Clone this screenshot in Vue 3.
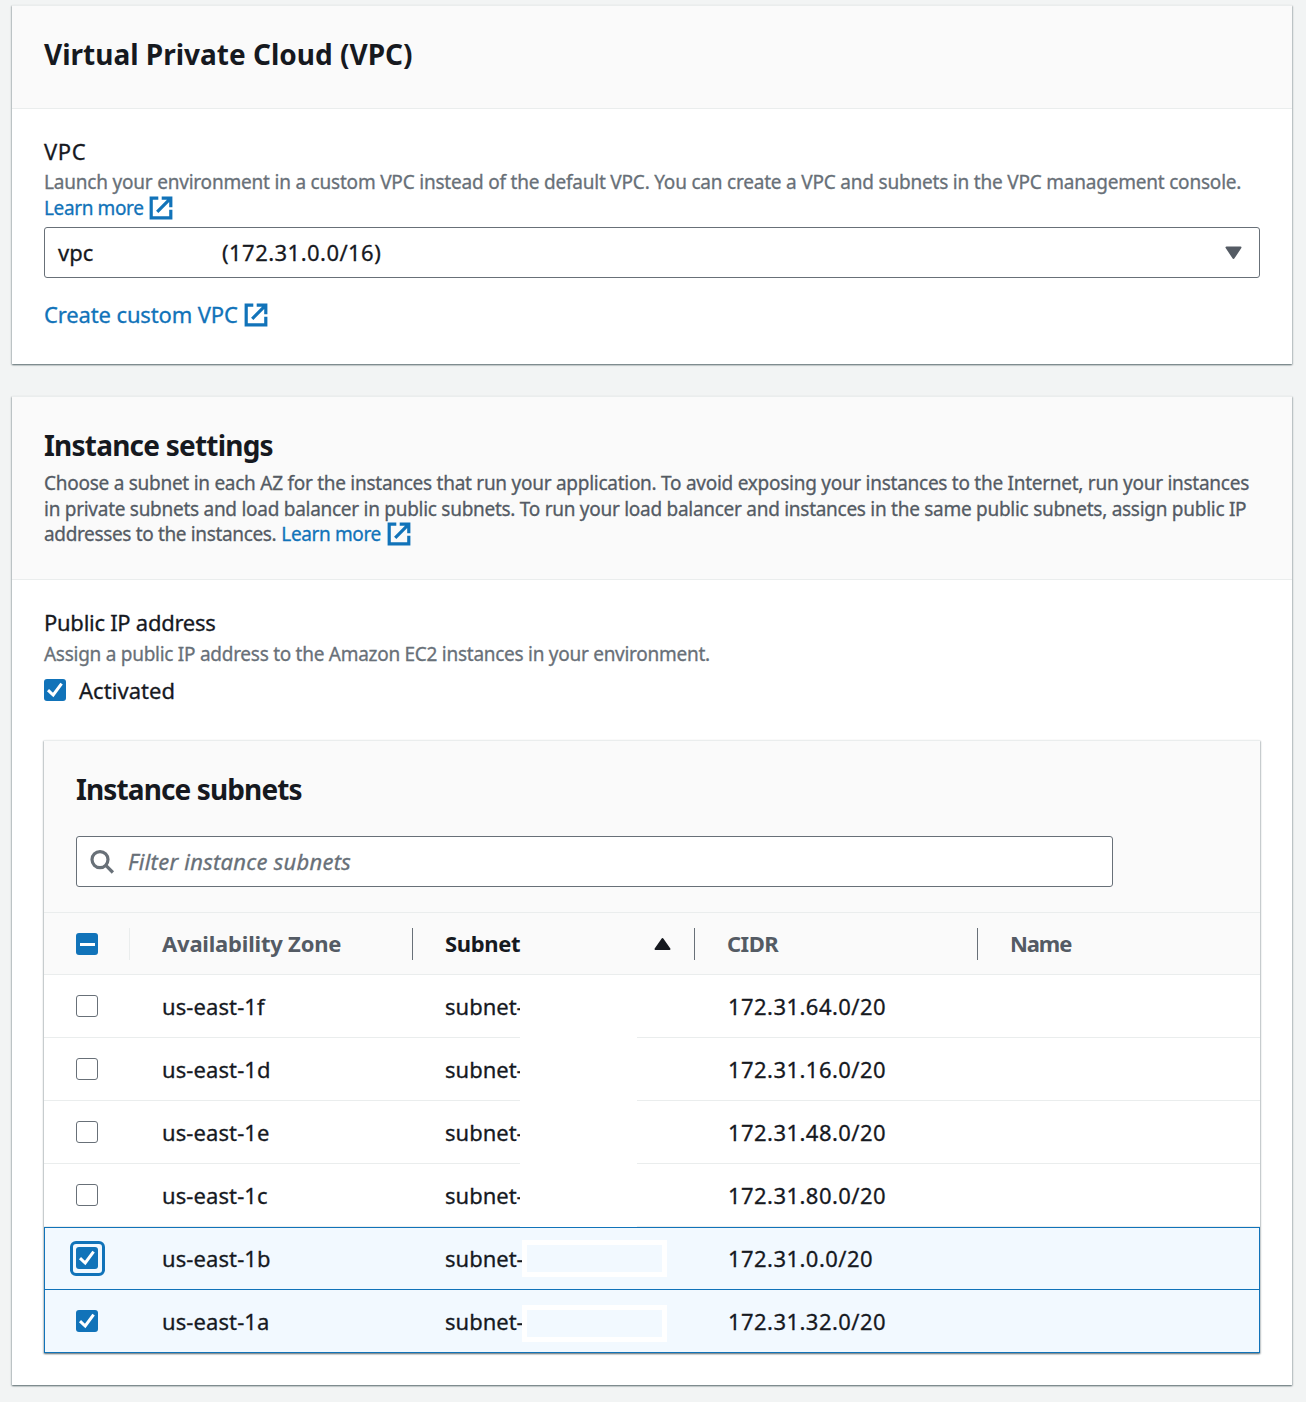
<script setup>
import { h } from 'vue'

const rows = [
  { zone: 'us-east-1f', cidr: '172.31.64.0/20' },
  { zone: 'us-east-1d', cidr: '172.31.16.0/20' },
  { zone: 'us-east-1e', cidr: '172.31.48.0/20' },
  { zone: 'us-east-1c', cidr: '172.31.80.0/20' },
  { zone: 'us-east-1b', cidr: '172.31.0.0/20', selected: true, focused: true },
  { zone: 'us-east-1a', cidr: '172.31.32.0/20', selected: true },
]

const ExternalIcon = () =>
  h('svg', { width: 24, height: 24, viewBox: '0 0 24 24', fill: 'none', stroke: 'currentColor', 'stroke-width': 3.2 }, [
    h('path', { d: 'M9.3 2.2H2.2v19.6h19.6v-8.1' }),
    h('path', { d: 'M12.7 2.2h9.1v9.1M21.8 2.2 8.2 15.8' }),
  ])
const CheckIcon = () =>
  h('svg', { width: 22, height: 22, viewBox: '0 0 22 22', fill: 'none', stroke: '#fff', 'stroke-width': 3 }, [
    h('path', { d: 'M4 11.2 9.2 16 17.6 4.6' }),
  ])
</script>

<template>
  <main class="page">
    <section class="card vpc-card">
      <header class="card-header"><h2>Virtual Private Cloud (VPC)</h2></header>
      <div class="card-body">
        <div class="label vpc-label">VPC</div>
        <div class="hint">Launch your environment in a custom VPC instead of the default VPC. You can create a VPC and subnets in the VPC management console.</div>
        <a class="link small"><span>Learn more</span><ExternalIcon /></a>
        <div class="select">
          <span class="select-name">vpc</span><span class="select-cidr">(172.31.0.0/16)</span>
          <svg class="caret" width="17" height="14" viewBox="0 0 17 14"><path d="M1.5 1.5h14l-7 10.5z" fill="#545b64" stroke="#545b64" stroke-width="2" stroke-linejoin="round" /></svg>
        </div>
        <a class="link create"><span>Create custom VPC</span><ExternalIcon /></a>
      </div>
    </section>

    <section class="card settings-card">
      <header class="card-header">
        <h2 class="tight">Instance settings</h2>
        <div class="desc d1">Choose a subnet in each AZ for the instances that run your application. To avoid exposing your instances to the Internet, run your instances</div>
        <div class="desc d2">in private subnets and load balancer in public subnets. To run your load balancer and instances in the same public subnets, assign public IP</div>
        <div class="desc d3"><span>addresses to the instances.</span> <a class="link small"><span>Learn more</span><ExternalIcon /></a></div>
      </header>
      <div class="card-body">
        <div class="label ip-label">Public IP address</div>
        <div class="hint assign">Assign a public IP address to the Amazon EC2 instances in your environment.</div>
        <label class="activated"><span class="box checked"><CheckIcon /></span><span>Activated</span></label>

        <div class="card table-card">
          <div class="table-head">
            <h2 class="tighter">Instance subnets</h2>
            <div class="search">
              <svg width="26" height="26" viewBox="0 0 26 26" fill="none" stroke="#687078" stroke-width="3.2"><circle cx="11" cy="10.6" r="8" /><path d="m16.6 16.2 7.3 7.3" /></svg>
              <span>Filter instance subnets</span>
            </div>
          </div>
          <div class="row columns">
            <div class="cell pick"><span class="box checked"><i class="dash"></i></span></div>
            <div class="cell col-zone"><span>Availability Zone</span></div>
            <div class="cell sorted"><span>Subnet</span><svg class="sort" width="17" height="14" viewBox="0 0 17 14"><path d="M1.5 12h14l-7-10z" fill="#16191f" stroke="#16191f" stroke-width="2" stroke-linejoin="round" /></svg></div>
            <div class="cell col-cidr"><span>CIDR</span></div>
            <div class="cell col-name"><span>Name</span></div>
          </div>
          <div v-for="r in rows" :key="r.zone" class="row" :class="{ selected: r.selected, focused: r.focused }">
            <div class="cell pick"><span class="box" :class="{ checked: r.selected }"><CheckIcon v-if="r.selected" /></span></div>
            <div class="cell zone">{{ r.zone }}</div>
            <div class="cell">subnet-<i class="mask"></i></div>
            <div class="cell cidr">{{ r.cidr }}</div>
            <div class="cell"></div>
          </div>
        </div>
      </div>
    </section>
  </main>
</template>

<style>
body { margin: 0; background: #f2f4f4; }
</style>

<style scoped>
* { box-sizing: border-box; }
.page {
  width: 1306px;
  height: 1402px;
  padding: 5px 14px 0 12px;
  overflow: hidden;
  background: #f2f4f4;
  color: #16191f;
  font: 400 22px/34px "Noto Sans", sans-serif;
  -webkit-text-stroke: .3px currentColor;
  white-space: nowrap;
}
.card {
  background: #fff;
  border-top: 1px solid #eaeded;
  box-shadow: 0 1px 1.5px rgba(0, 28, 36, .45), 1px 1px 1.5px rgba(0, 28, 36, .15), -1px 1px 1.5px rgba(0, 28, 36, .15);
}
.vpc-card { height: 359px; }
.settings-card { height: 989px; margin-top: 32px; }
.card-header { background: #fafafa; border-bottom: 1px solid #eaeded; padding: 30px 32px 0; }
.vpc-card .card-header { height: 103px; }
.settings-card > .card-header { height: 183px; }
.card-body { padding: 25px 32px 0; }
h2 { margin: 0; font-size: 28px; line-height: 36px; font-weight: 700; -webkit-text-stroke: 0; }
.tight { letter-spacing: -.78px; }
.tighter { letter-spacing: -.88px; }
.label { height: 35px; }
.vpc-label { letter-spacing: .6px; }
.ip-label { height: 36px; letter-spacing: -.27px; }
.hint { font-size: 19px; line-height: 26px; color: #687078; letter-spacing: -.205px; }
.assign { letter-spacing: -.27px; }
.desc { font-size: 19px; line-height: 25.5px; height: 25.5px; color: #545b64; }
.d1 { margin-top: 8px; letter-spacing: -.266px; }
.d2 { letter-spacing: -.275px; }
.d3 { display: flex; gap: 5px; letter-spacing: -.35px; }
.link { display: flex; align-items: center; gap: 6px; color: #1173b9; letter-spacing: -.13px; }
.link.small { gap: 5px; font-size: 19px; line-height: 26px; height: 26px; letter-spacing: -.38px; }
.d3 .link.small { gap: 6px; margin-top: -1px; }
.link svg { flex: none; }
.select {
  display: flex;
  align-items: center;
  height: 51px;
  margin-top: 6px;
  padding: 0 17px 0 13px;
  border: 1px solid #687078;
  border-radius: 3px;
  line-height: 32px;
}
.select span { margin-bottom: 2px; }
.select-name { width: 164px; }
.select-cidr { letter-spacing: .46px; }
.caret { margin-left: auto; }
.create { margin-top: 20px; line-height: 32px; height: 34px; }
.create span { margin-bottom: 2px; }
.activated { display: flex; align-items: center; gap: 13px; height: 34px; margin-top: 6px; letter-spacing: .05px; }
.box {
  display: block;
  position: relative;
  width: 22px;
  height: 22px;
  border: 1.5px solid #687078;
  border-radius: 3px;
  background: #fff;
}
.box.checked { border: 0; background: #1173b9; }
.box svg { display: block; }
.dash { display: block; width: 15px; height: 3px; margin: 0 0 0 4px; background: #fff; transform: translateY(10px); }
.table-card { height: 613px; margin-top: 33px; }
.table-head { height: 171px; padding: 30px 32px 0; background: #fafafa; }
.search {
  display: flex;
  align-items: center;
  gap: 13px;
  width: 1037px;
  height: 51px;
  margin-top: 29px;
  padding-left: 12px;
  background: #fff;
  border: 1px solid #687078;
  border-radius: 3px;
  color: #687078;
  font-style: italic;
  letter-spacing: .25px;
}
.search span { margin-bottom: 2px; }
.row { display: grid; grid-template-columns: 86px 283px 282px 283px 1fr; height: 63px; border-bottom: 1px solid #eaeded; }
.cell { position: relative; display: flex; align-items: center; padding-left: 32px; }
.zone { letter-spacing: .1px; }
.columns { background: #fafafa; border-top: 1px solid #eaeded; color: #545b64; font-weight: 700; -webkit-text-stroke: 0; }
.columns .cell:not(.pick) > span { margin-bottom: 2px; }
.columns .cell:not(:last-child)::after { content: ""; position: absolute; right: 0; top: 15px; width: 1px; height: 32px; background: #687078; }
.columns .pick:first-child::after { background: #eaeded; }
.col-zone { letter-spacing: -.2px; }
.col-cidr { letter-spacing: -.5px; }
.col-name { letter-spacing: -1.1px; }
.sorted { color: #16191f; letter-spacing: -.35px; }
.sort { margin-left: auto; margin-right: 24px; }
.cidr { padding-left: 33px; letter-spacing: .45px; }
.mask { position: absolute; left: 107px; top: 0; width: 117px; height: 63px; background: #fff; }
.row.selected { background: #f2f9ff; border-bottom-color: #1173b9; box-shadow: inset 1px 0 #1173b9, inset -1px 0 #1173b9; }
.row.focused { box-shadow: inset 1px 0 #1173b9, inset -1px 0 #1173b9, inset 0 1px #1173b9; }
.selected .mask { left: 109px; top: 15px; width: 145px; height: 37px; border: 5px solid #fff; background: none; }
.focused .mask { top: 13px; }
.focused .box::after {
  content: "";
  position: absolute;
  inset: -6px -7px -7px -6px;
  border: 3px solid #1173b9;
  border-radius: 6px;
}
</style>
